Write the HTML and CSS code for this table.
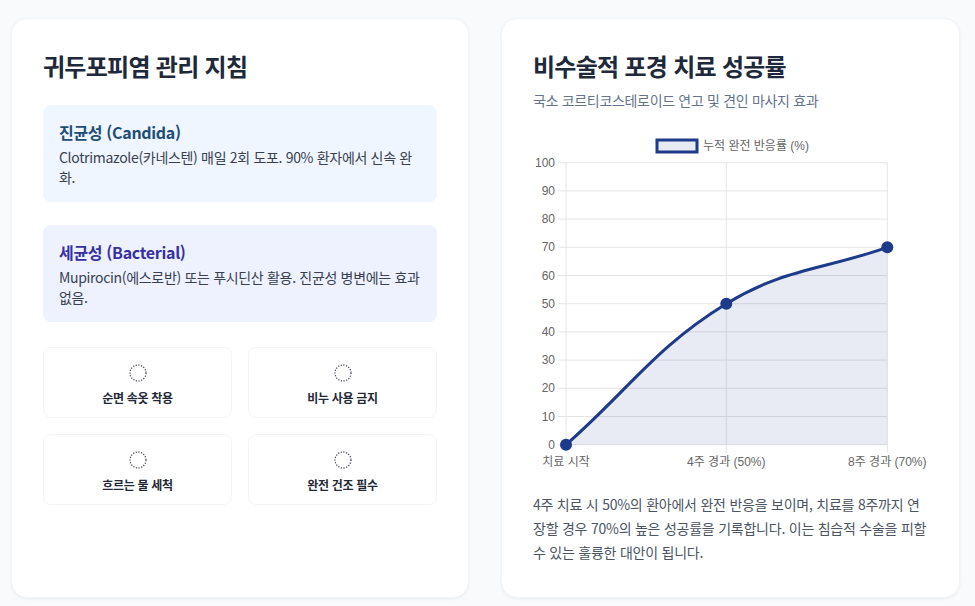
FILE: index.html
```html
<!DOCTYPE html>
<html lang="ko">
<head>
<meta charset="utf-8">
<title>귀두포피염 관리 지침</title>
<link rel="stylesheet" href="styles.css">
</head>
<body>
<div class="layout">
  <section class="card">
    <h2 class="card-title">귀두포피염 관리 지침</h2>
    <div class="info info-blue">
      <h3 class="info-title">진균성 (Candida)</h3>
      <p class="info-text">Clotrimazole(카네스텐) 매일 2회 도포. 90% 환자에서 신속 완화.</p>
    </div>
    <div class="info info-indigo">
      <h3 class="info-title">세균성 (Bacterial)</h3>
      <p class="info-text">Mupirocin(에스로반) 또는 푸시딘산 활용. 진균성 병변에는 효과 없음.</p>
    </div>
    <div class="tiles">
      <div class="tile">
        <svg class="tile-icon" viewBox="0 0 18 18"><circle cx="9" cy="9" r="8" /></svg>
        <span class="tile-label">순면 속옷 착용</span>
      </div>
      <div class="tile">
        <svg class="tile-icon" viewBox="0 0 18 18"><circle cx="9" cy="9" r="8" /></svg>
        <span class="tile-label">비누 사용 금지</span>
      </div>
      <div class="tile">
        <svg class="tile-icon" viewBox="0 0 18 18"><circle cx="9" cy="9" r="8" /></svg>
        <span class="tile-label">흐르는 물 세척</span>
      </div>
      <div class="tile">
        <svg class="tile-icon" viewBox="0 0 18 18"><circle cx="9" cy="9" r="8" /></svg>
        <span class="tile-label">완전 건조 필수</span>
      </div>
    </div>
  </section>

  <section class="card">
    <h2 class="card-title">비수술적 포경 치료 성공률</h2>
    <p class="subtitle">국소 코르티코스테로이드 연고 및 견인 마사지 효과</p>
    <div class="chart">
      <svg class="chart-svg" viewBox="0 0 395 340" width="395" height="340">
        <g class="legend">
          <rect x="124" y="6" width="40" height="12" class="legend-box"/>
          <text x="170" y="15.5" class="legend-text">누적 완전 반응률 (%)</text>
        </g>
        <g class="grid">
          <line x1="25" y1="28.7" x2="354.3" y2="28.7"/>
          <line x1="25" y1="56.9" x2="354.3" y2="56.9"/>
          <line x1="25" y1="85.1" x2="354.3" y2="85.1"/>
          <line x1="25" y1="113.3" x2="354.3" y2="113.3"/>
          <line x1="25" y1="141.5" x2="354.3" y2="141.5"/>
          <line x1="25" y1="169.7" x2="354.3" y2="169.7"/>
          <line x1="25" y1="197.9" x2="354.3" y2="197.9"/>
          <line x1="25" y1="226.1" x2="354.3" y2="226.1"/>
          <line x1="25" y1="254.3" x2="354.3" y2="254.3"/>
          <line x1="25" y1="282.5" x2="354.3" y2="282.5"/>
          <line x1="25" y1="310.7" x2="354.3" y2="310.7"/>
          <line x1="33" y1="28.7" x2="33" y2="318.7"/>
          <line x1="193.3" y1="28.7" x2="193.3" y2="318.7"/>
          <line x1="354.3" y1="28.7" x2="354.3" y2="318.7"/>
        </g>
        <g class="y-labels">
          <text x="22" y="32.7">100</text>
          <text x="22" y="60.9">90</text>
          <text x="22" y="89.1">80</text>
          <text x="22" y="117.3">70</text>
          <text x="22" y="145.5">60</text>
          <text x="22" y="173.7">50</text>
          <text x="22" y="201.9">40</text>
          <text x="22" y="230.1">30</text>
          <text x="22" y="258.3">20</text>
          <text x="22" y="286.5">10</text>
          <text x="22" y="314.7">0</text>
        </g>
        <g class="x-labels">
          <text x="33" y="332">치료 시작</text>
          <text x="193.3" y="332">4주 경과 (50%)</text>
          <text x="354.3" y="332">8주 경과 (70%)</text>
        </g>
        <path class="area" d="M33,310.7 C97.1,254.3 122,213.5 193.3,169.7 C250.5,134.6 289.9,135.9 354.3,113.3 L354.3,310.7 Z"/>
        <path class="line" d="M33,310.7 C97.1,254.3 122,213.5 193.3,169.7 C250.5,134.6 289.9,135.9 354.3,113.3"/>
        <circle class="pt" cx="33" cy="310.7" r="6"/>
        <circle class="pt" cx="193.3" cy="169.7" r="6"/>
        <circle class="pt" cx="354.3" cy="113.3" r="6"/>
      </svg>
    </div>
    <p class="summary">4주 치료 시 50%의 환아에서 완전 반응을 보이며, 치료를 8주까지 연장할 경우 70%의 높은 성공률을 기록합니다. 이는 침습적 수술을 피할 수 있는 훌륭한 대안이 됩니다.</p>
  </section>
</div>
</body>
</html>
```

FILE: styles.css
```css
* { box-sizing: border-box; }

html, body {
  margin: 0;
  padding: 0;
  background: #f8fafc;
}

body {
  font-family: "Noto Sans CJK KR", "Noto Sans", sans-serif;
  color: #1e293b;
  padding: 18px 0 10px 11px;
  letter-spacing: -0.02em;
}

.layout {
  width: 949px;
  display: grid;
  grid-template-columns: 1fr 1fr;
  gap: 32px;
}

.card {
  background: #ffffff;
  border-radius: 16px;
  border: 1px solid #f1f5f9;
  box-shadow: 0 1px 3px rgba(15, 23, 42, 0.06);
  padding: 31px 31px 33px;
}

.card-title {
  margin: 0;
  font-size: 24px;
  line-height: 32px;
  font-weight: 700;
  color: #1e293b;
  letter-spacing: -0.03em;
}

.info {
  border-radius: 8px;
  padding: 15px 16px 15px;
  margin-top: 23px;
}

.info-blue { background: #eff6ff; }
.info-indigo { background: #eef2ff; }

.info-title {
  margin: 0 0 3px;
  font-size: 16px;
  line-height: 24px;
  font-weight: 700;
}

.info-blue .info-title { color: #1e4d78; }
.info-indigo .info-title { color: #3730a3; }

.info-text {
  margin: 0;
  font-size: 14px;
  line-height: 20px;
  color: #374151;
}

.tiles {
  margin-top: 25px;
  display: grid;
  grid-template-columns: 1fr 1fr;
  gap: 16px;
}

.tile {
  border: 1px solid #f1f5f9;
  border-radius: 8px;
  padding: 16px 12px 11px;
  display: flex;
  flex-direction: column;
  align-items: center;
  gap: 8px;
}

.tile-icon {
  width: 18px;
  height: 18px;
  display: block;
}

.tile-icon circle {
  fill: none;
  stroke: #4b4b5c;
  stroke-width: 1.3;
  stroke-dasharray: 1.2 1.5;
}

.tile-label {
  font-size: 12px;
  line-height: 16px;
  font-weight: 700;
  color: #1f2937;
}

.subtitle {
  margin: 8px 0 0;
  font-size: 14px;
  line-height: 20px;
  color: #64748b;
}

.chart {
  margin-top: 24px;
  height: 340px;
}

.chart-svg { display: block; letter-spacing: 0; }

.chart-svg text {
  font-family: "Liberation Sans", "Noto Sans CJK KR", sans-serif;
  font-size: 12px;
  fill: #666666;
}

.legend-box {
  fill: #e6eaf3;
  stroke: #1e3a8a;
  stroke-width: 3;
}

.grid line {
  stroke: #e5e5e5;
  stroke-width: 1;
}

.y-labels text { text-anchor: end; }
.x-labels text { text-anchor: middle; }

.area { fill: rgba(30, 58, 138, 0.1); stroke: none; }

.line {
  fill: none;
  stroke: #1e3a8a;
  stroke-width: 3;
}

.pt { fill: #1e3a8a; }

.summary {
  margin: 18px 0 0;
  font-size: 14px;
  line-height: 24px;
  color: #4b5563;
  letter-spacing: -0.017em;
}
```
